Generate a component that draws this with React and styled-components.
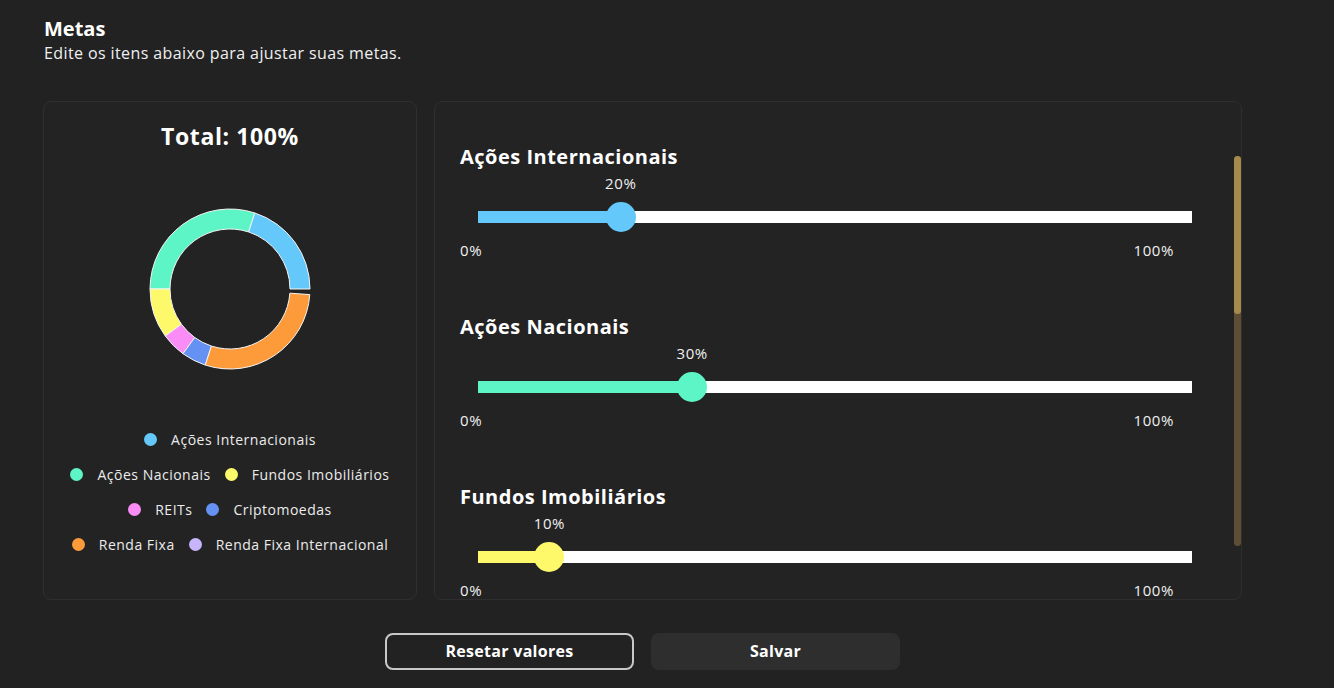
import React, { useState } from 'react';
import styled, { createGlobalStyle } from 'styled-components';

const GlobalStyle = createGlobalStyle`
  body {
    margin: 0;
    background: #222222;
    font-family: 'Open Sans', 'Liberation Sans', sans-serif;
    color: #ffffff;
  }
`;

const Page = styled.div`
  width: 1199px;
  padding: 17px 0 0 43px;
  box-sizing: content-box;
`;

const Title = styled.h1`
  margin: 0 0 0 1px;
  font-size: 20px;
  line-height: 24px;
  font-weight: 700;
`;

const Subtitle = styled.p`
  margin: 1px 0 0 1px;
  font-size: 16px;
  letter-spacing: 0.4px;
  line-height: 22px;
  color: #f0f0f0;
`;

const Row = styled.div`
  display: flex;
  gap: 17px;
  margin-top: 37px;
`;

const Card = styled.div`
  position: relative;
  box-sizing: border-box;
  height: 499px;
  width: ${(p) => p.$width}px;
  background: #232323;
  border: 1px solid #2f2f2f;
  border-radius: 8px;
`;

const ChartCard = styled(Card)`
  display: flex;
  flex-direction: column;
  align-items: center;
  padding-top: 19px;
`;

const Total = styled.h2`
  margin: 0;
  font-size: 23px;
  letter-spacing: 0.6px;
  line-height: 30px;
  font-weight: 700;
`;

const Donut = styled.svg`
  margin-top: 53px;
  display: block;
`;

const Legend = styled.div`
  margin-top: 57px;
  display: flex;
  flex-direction: column;
  align-items: center;
  gap: 18px;
`;

const LegendRow = styled.div`
  display: flex;
  gap: 14px;
`;

const LegendItem = styled.div`
  display: flex;
  align-items: center;
  gap: 14px;
  font-size: 14px;
  letter-spacing: 0.5px;
  line-height: 17px;
  color: #ececec;
`;

const Dot = styled.span`
  width: 13px;
  height: 13px;
  border-radius: 50%;
  background: ${(p) => p.$color};
`;

const ScrollArea = styled.div`
  height: 100%;
  box-sizing: border-box;
  overflow-y: auto;
  padding: 43px 0 0 25px;
  scrollbar-width: none;
  &::-webkit-scrollbar {
    display: none;
  }
`;

const ScrollTrack = styled.div`
  position: absolute;
  right: 0;
  top: 54px;
  bottom: 53px;
  width: 7px;
  border-radius: 4px;
  background: #5e4e36;
`;

const ScrollThumb = styled.div`
  height: 158px;
  border-radius: 4px;
  background: #a58a4b;
`;

const Block = styled.div`
  height: 170px;
  width: 732px;
`;

const BlockTitle = styled.h3`
  margin: 0;
  font-size: 20px;
  letter-spacing: 0.5px;
  line-height: 24px;
  font-weight: 700;
`;

const ValueRow = styled.div`
  position: relative;
  height: 20px;
  margin: 4px 0 0 18px;
  width: 714px;
`;

const Value = styled.span`
  position: absolute;
  top: 0;
  transform: translateX(-50%);
  font-size: 15px;
  letter-spacing: 0.6px;
  line-height: 20px;
  color: #f0f0f0;
`;

const Track = styled.div`
  position: relative;
  margin: 18px 0 0 18px;
  width: 714px;
  height: 12px;
  background: #ffffff;
`;

const Fill = styled.div`
  height: 100%;
  background: ${(p) => p.$color};
`;

const Thumb = styled.div`
  position: absolute;
  top: 50%;
  width: 30px;
  height: 30px;
  border-radius: 50%;
  background: ${(p) => p.$color};
  transform: translate(-50%, -50%);
`;

const Scale = styled.div`
  display: flex;
  justify-content: space-between;
  width: 714px;
  margin-top: 17px;
  font-size: 15px;
  letter-spacing: 0.6px;
  line-height: 20px;
  color: #f0f0f0;
`;

const Actions = styled.div`
  display: flex;
  justify-content: center;
  gap: 17px;
  margin-top: 33px;
`;

const Button = styled.button`
  width: 249px;
  height: 37px;
  padding: 0 0 2px;
  border-radius: 8px;
  font-family: inherit;
  font-size: 16px;
  letter-spacing: 0.3px;
  font-weight: 700;
  color: #ffffff;
  cursor: pointer;
  background: ${(p) => (p.$outline ? '#222222' : '#2e2e2e')};
  border: ${(p) => (p.$outline ? '2px solid #c8c8c8' : 'none')};
`;

const goals = [
  { name: 'Ações Internacionais', value: 20, color: '#64c8fa' },
  { name: 'Ações Nacionais', value: 30, color: '#5ef5c6' },
  { name: 'Fundos Imobiliários', value: 10, color: '#fdf96b' },
  { name: 'REITs', value: 5, color: '#fa8cf6' },
  { name: 'Criptomoedas', value: 5, color: '#6592f2' },
  { name: 'Renda Fixa', value: 30, color: '#fd9b3b' },
  { name: 'Renda Fixa Internacional', value: 0, color: '#c8b4fa' },
];

const legendRows = [[0], [1, 2], [3, 4], [5, 6]];

const point = (cx, cy, r, deg) => {
  const a = (deg * Math.PI) / 180;
  return [cx + r * Math.cos(a), cy - r * Math.sin(a)];
};

const arcPath = (cx, cy, r0, r1, a0, a1) => {
  const large = a1 - a0 > 180 ? 1 : 0;
  const [x1, y1] = point(cx, cy, r1, a0);
  const [x2, y2] = point(cx, cy, r1, a1);
  const [x3, y3] = point(cx, cy, r0, a1);
  const [x4, y4] = point(cx, cy, r0, a0);
  return `M${x1} ${y1} A${r1} ${r1} 0 ${large} 0 ${x2} ${y2} L${x3} ${y3} A${r0} ${r0} 0 ${large} 1 ${x4} ${y4} Z`;
};

const DonutChart = ({ data }) => {
  let start = 0;
  const slices = data
    .filter((d) => d.value > 0)
    .map((d, i, arr) => {
      const a0 = start;
      let a1 = start + d.value * 3.6;
      start = a1;
      if (i === arr.length - 1) a1 -= 4;
      return <path key={d.name} d={arcPath(85, 85, 60, 80, a0, a1)} fill={d.color} stroke="#f4f4f4" strokeWidth="1" />;
    });
  return (
    <Donut width="170" height="170" viewBox="0 0 170 170">
      {slices}
    </Donut>
  );
};

const GoalSlider = ({ goal }) => (
  <Block>
    <BlockTitle>{goal.name}</BlockTitle>
    <ValueRow>
      <Value style={{ left: `${goal.value}%` }}>{goal.value}%</Value>
    </ValueRow>
    <Track>
      <Fill $color={goal.color} style={{ width: `${goal.value}%` }} />
      <Thumb $color={goal.color} style={{ left: `${goal.value}%` }} />
    </Track>
    <Scale>
      <span>0%</span>
      <span>100%</span>
    </Scale>
  </Block>
);

export default function App() {
  const [items] = useState(goals);
  const total = items.reduce((s, g) => s + g.value, 0);

  return (
    <Page>
      <GlobalStyle />
      <Title>Metas</Title>
      <Subtitle>Edite os itens abaixo para ajustar suas metas.</Subtitle>
      <Row>
        <ChartCard $width={374}>
          <Total>Total: {total}%</Total>
          <DonutChart data={items} />
          <Legend>
            {legendRows.map((row, i) => (
              <LegendRow key={i}>
                {row.map((idx) => (
                  <LegendItem key={items[idx].name}>
                    <Dot $color={items[idx].color} />
                    {items[idx].name}
                  </LegendItem>
                ))}
              </LegendRow>
            ))}
          </Legend>
        </ChartCard>
        <Card $width={808}>
          <ScrollArea>
            {items.map((g) => (
              <GoalSlider key={g.name} goal={g} />
            ))}
          </ScrollArea>
          <ScrollTrack>
            <ScrollThumb />
          </ScrollTrack>
        </Card>
      </Row>
      <Actions>
        <Button $outline>Resetar valores</Button>
        <Button>Salvar</Button>
      </Actions>
    </Page>
  );
}
